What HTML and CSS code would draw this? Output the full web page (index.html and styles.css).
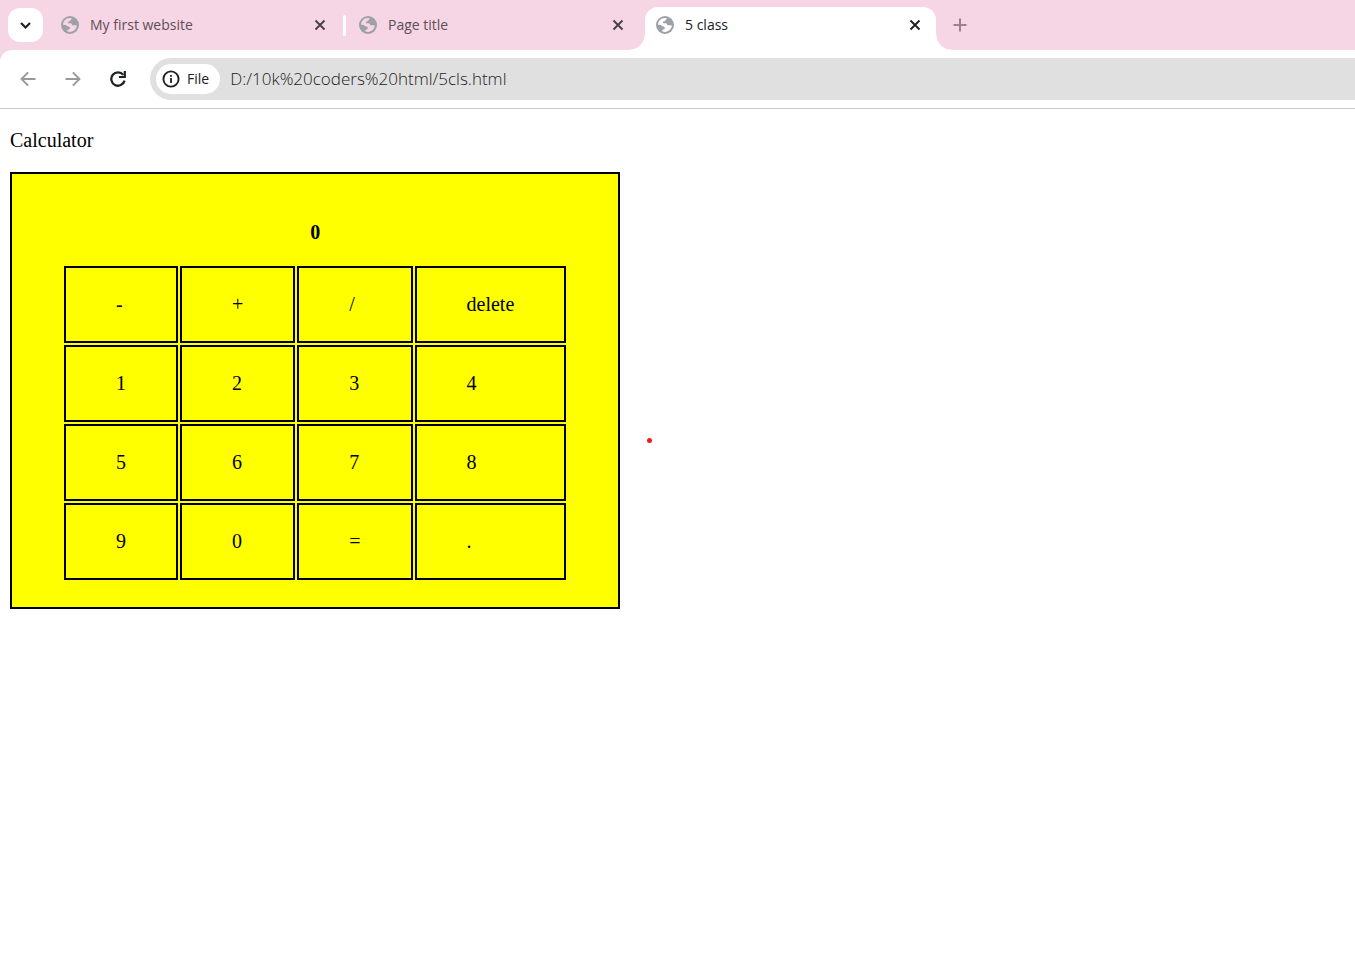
FILE: index.html
```html
<!DOCTYPE html>
<html lang="en">
<head>
<meta charset="utf-8">
<title>5 class</title>
<link rel="stylesheet" href="styles.css">
</head>
<body>
<svg class="defs" aria-hidden="true">
  <symbol id="globe" viewBox="0 0 18 18">
    <circle cx="9" cy="9" r="9" fill="#9ba1a6"/>
    <path class="land" d="M11 2.300L9.400 4.500Q8.800 5.600 7 5.800V7.200H9.800Q11.300 7.500 11.300 9.300H13.500Q14.500 9.200 15.900 9.600C15.500 13.200 12.600 15.900 9 15.900Q7.500 15.900 6.200 15.300L6.500 13.700Q8.900 13.500 8.900 12Q8.900 10.700 7.300 10.400Q5 10 4.800 9L2.100 8.800C2.100 5 5 2.100 9 2.100Z"/>
  </symbol>
  <symbol id="close" viewBox="0 0 16 16">
    <path d="M3.500 3.500L12.500 12.500M12.500 3.500L3.500 12.500" fill="none" stroke="currentColor" stroke-width="1.900"/>
  </symbol>
</svg>
<header>
  <div class="strip">
    <button class="search" aria-label="Search tabs"><svg width="15" height="15" viewBox="0 0 15 15"><path d="M3 5L7.500 9.500L12 5" fill="none" stroke="currentColor" stroke-width="2.200"/></svg></button>
    <div class="tab">
      <svg class="globe"><use href="#globe"/></svg>
      <button class="title">My first website</button>
      <button class="close" aria-label="Close My first website"><svg><use href="#close"/></svg></button>
    </div>
    <span class="divider"></span>
    <div class="tab">
      <svg class="globe"><use href="#globe"/></svg>
      <button class="title">Page title</button>
      <button class="close" aria-label="Close Page title"><svg><use href="#close"/></svg></button>
    </div>
    <span class="space"></span>
    <div class="tab active">
      <svg class="globe"><use href="#globe"/></svg>
      <button class="title">5 class</button>
      <button class="close" aria-label="Close 5 class"><svg><use href="#close"/></svg></button>
    </div>
    <button class="new" aria-label="New tab"><svg width="14" height="14" viewBox="0 0 14 14"><path d="M7 0.500V13.500M0.500 7H13.500" stroke="currentColor" stroke-width="2"/></svg></button>
  </div>
  <div class="toolbar">
    <button class="nav" aria-label="Back"><svg width="16" height="16" viewBox="0 0 16 16"><path d="M15.500 8H2M8.200 1.300L1.500 8L8.200 14.700" fill="none" stroke="currentColor" stroke-width="1.900"/></svg></button>
    <button class="nav" aria-label="Forward"><svg width="16" height="16" viewBox="0 0 16 16"><path d="M0.500 8H14M7.800 1.300L14.500 8L7.800 14.700" fill="none" stroke="currentColor" stroke-width="1.900"/></svg></button>
    <button class="nav reload" aria-label="Reload"><svg width="16" height="16" viewBox="0 0 16 16"><path d="M13.300 3.900A6.700 6.700 0 1 0 14.500 9.600" fill="none" stroke="currentColor" stroke-width="2.300"/><path d="M13.700 0H15.900V7H8.900V4.900H13.700Z" fill="currentColor"/></svg></button>
    <div class="omnibox">
      <button class="chip"><svg width="18" height="18" viewBox="0 0 18 18"><circle cx="9" cy="9" r="7.600" fill="none" stroke="currentColor" stroke-width="1.900"/><path d="M8.100 8H9.900V13H8.100ZM8.100 5H9.900V6.800H8.100Z" fill="currentColor"/></svg>File</button>
      <input class="url" type="text" aria-label="Address" value="D:/10k%20coders%20html/5cls.html">
    </div>
  </div>
</header>
<main>
  <p class="heading">Calculator</p>
  <table class="calc">
    <tr><th colspan="4"><output>0</output></th></tr>
    <tr><td><button>-</button></td><td><button>+</button></td><td><button>/</button></td><td><button>delete</button></td></tr>
    <tr><td><button>1</button></td><td><button>2</button></td><td><button>3</button></td><td><button>4</button></td></tr>
    <tr><td><button>5</button></td><td><button>6</button></td><td><button>7</button></td><td><button>8</button></td></tr>
    <tr><td><button>9</button></td><td><button>0</button></td><td><button>=</button></td><td><button>.</button></td></tr>
  </table>
  <span class="dot"></span>
</main>
</body>
</html>
```
FILE: styles.css
```css
* { box-sizing: border-box; }
body {
  margin: 0;
  background: #fff;
  color: #000;
  font-family: "Liberation Serif", "Times New Roman", serif;
  font-size: 20px;
  line-height: 23px;
}
button, input {
  margin: 0;
  padding: 0;
  border: 0;
  background: none;
  color: inherit;
  font: inherit;
}
svg { display: block; flex: none; }
.defs { position: absolute; width: 0; height: 0; }
header {
  --pink: #f6d5e4;
  background: var(--pink);
  color: #202124;
  font-family: "Open Sans", "Noto Sans", sans-serif;
  font-size: 14px;
  line-height: 20px;
}
.strip {
  display: flex;
  align-items: center;
  height: 50px;
  padding-left: 8px;
  overflow: hidden;
}
.search {
  display: grid;
  place-items: center;
  width: 35px;
  height: 34px;
  margin-right: 7px;
  border-radius: 12px;
  background: #fff;
}
.tab {
  --land: var(--pink);
  position: relative;
  display: flex;
  align-items: center;
  flex: 0 1 291px;
  min-width: 0;
  height: 36px;
  padding: 0 13px 0 11px;
  color: #5c4f56;
}
.globe { width: 18px; height: 18px; }
.land { fill: var(--land); }
.title {
  flex: 1;
  min-width: 0;
  padding-left: 11px;
  overflow: hidden;
  text-align: left;
  white-space: nowrap;
}
.close svg { width: 16px; height: 16px; }
.close { color: #4a3f45; }
.divider {
  width: 3px;
  height: 21px;
  margin: 0 2px;
  border-radius: 2px;
  background: #fff;
}
.space { width: 6px; }
.tab.active {
  --land: #fff;
  align-self: flex-end;
  height: 43px;
  padding-bottom: 7px;
  border-radius: 13px 13px 0 0;
  background: #fff;
  color: #202124;
}
.active .close { color: #202124; }
.active::before, .active::after {
  content: "";
  position: absolute;
  bottom: 0;
  width: 15px;
  height: 15px;
}
.active::before {
  right: 100%;
  background: radial-gradient(circle at 0 0, transparent 14px, #fff 15px);
}
.active::after {
  left: 100%;
  background: radial-gradient(circle at 100% 0, transparent 14px, #fff 15px);
}
.new { margin-left: 17px; color: #96838c; }
.toolbar {
  display: flex;
  align-items: center;
  height: 59px;
  padding-left: 20px;
  border-bottom: 1px solid #c9c9c9;
  border-radius: 12px 0 0 0;
  background: #fff;
}
.nav { margin-right: 29px; color: #999; }
.reload { margin-right: 24px; color: #202124; }
.omnibox {
  display: flex;
  align-items: center;
  flex: 1;
  height: 42px;
  padding-left: 6px;
  border-radius: 21px 0 0 21px;
  background: #e0e0e0;
}
.chip {
  display: flex;
  align-items: center;
  gap: 7px;
  height: 30px;
  padding: 0 11px 0 6px;
  border-radius: 15px;
  background: #fff;
  font-weight: 500;
}
.url {
  flex: 1;
  min-width: 0;
  padding-left: 10px;
  font-size: 17px;
  font-weight: 300;
  line-height: 24px;
}
main { position: relative; padding: 20px 10px; }
.heading { margin: 0 0 20px; }
.calc {
  padding: 25px 50px;
  border: 2px solid #000;
  border-spacing: 2px;
  background: #ff0;
}
th { padding: 20px 50px; }
td { padding: 0; border: 2px solid #000; }
td button {
  display: block;
  width: 100%;
  padding: 25px 50px;
  text-align: left;
}
.dot {
  position: absolute;
  top: 329px;
  left: 647px;
  width: 5px;
  height: 5px;
  border-radius: 50%;
  background: #ed1c24;
}
```
